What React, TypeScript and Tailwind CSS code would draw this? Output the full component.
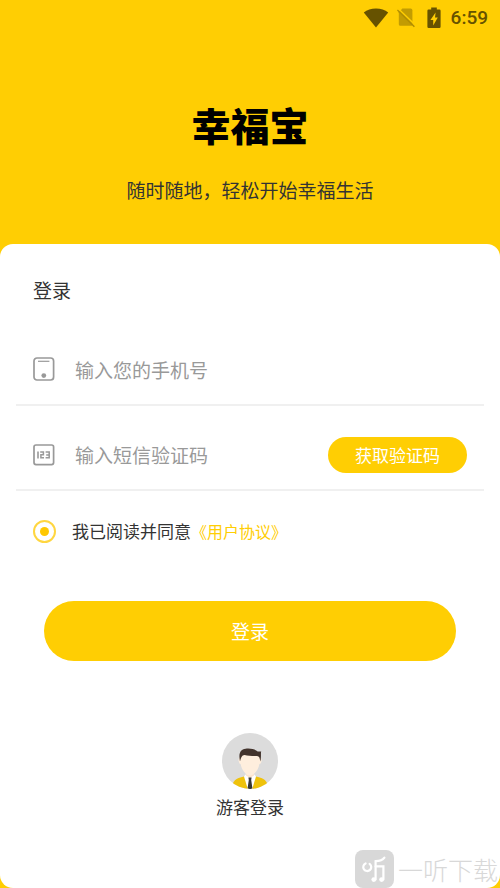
import { useState } from 'react'

function StatusBar() {
  return (
    <div className="flex h-9 items-center justify-end px-3 text-[#665200]">
      <svg width="26" height="20" viewBox="0 0 26 20" fill="currentColor" aria-hidden="true">
        <path d="M13 19.4 L0.8 4.4 C4 1.8 8.2 0.4 13 0.4 S22 1.8 25.2 4.4 Z" />
      </svg>
      <svg className="ml-2" width="18" height="20" viewBox="0 0 18 20" aria-hidden="true">
        <path d="M5.4 0.6 H13.6 Q15.4 0.6 15.4 2.4 V16.8 Q15.4 17.8 14.4 17.8 H3.4 Q1.8 17.8 1.8 16.2 V4.2 Z" fill="#c29c02" />
        <path d="M1.4 0.8 L18.4 17.2" stroke="#ffce03" strokeWidth="1.4" />
        <path d="M0.4 2 L17.4 18.8" stroke="#b08d02" strokeWidth="1.4" />
      </svg>
      <svg className="ml-3" width="14" height="22" viewBox="0 0 14 22" aria-hidden="true">
        <path
          d="M4.2 0.6 H9.8 V2.6 H12.4 Q13.6 2.6 13.6 3.8 V19.8 Q13.6 21 12.4 21 H1.6 Q0.4 21 0.4 19.8 V3.8 Q0.4 2.6 1.6 2.6 H4.2 Z"
          fill="currentColor"
        />
        <path d="M8.6 5.4 L3.4 13 H6.2 V18.6 L10.8 10.4 H8 Z" fill="#ffce03" />
      </svg>
      <span className="ml-2.5 font-['Roboto',sans-serif] text-[19px] font-medium leading-6">6:59</span>
    </div>
  )
}

function PhoneIcon() {
  return (
    <svg width="22" height="24" viewBox="0 0 22 24" fill="none" stroke="#999" aria-hidden="true">
      <rect x="1" y="1" width="19.6" height="22" rx="3" strokeWidth="1.7" />
      <path d="M5 4.3 H16.4" strokeWidth="1.2" />
      <circle cx="10.8" cy="18.6" r="2.4" fill="#999" stroke="none" />
    </svg>
  )
}

function CodeIcon() {
  return (
    <svg width="22" height="22" viewBox="0 0 22 22" fill="none" stroke="#999" aria-hidden="true">
      <rect x="1" y="1" width="19.6" height="19.6" rx="2" strokeWidth="1.7" />
      <path d="M5 7.4 V14.4" strokeWidth="1.6" />
      <path d="M7.2 8 H10.4 V10.8 H7.9 V13.8 H11 M12.6 8 H16.2 V13.8 H12.6 M13.2 10.9 H16.2" strokeWidth="1.5" />
    </svg>
  )
}

function Avatar() {
  return (
    <svg width="56" height="56" viewBox="0 0 56 56" aria-hidden="true">
      <defs>
        <clipPath id="avatar-clip">
          <circle cx="28" cy="28" r="28" />
        </clipPath>
      </defs>
      <g clipPath="url(#avatar-clip)">
        <rect width="56" height="56" fill="#dcdcdc" />
        <path d="M9 58 C10 48 13 45.4 22 43.4 H34 C43 45.4 46 48 47 58 Z" fill="#efc20b" />
        <path d="M23.6 41.5 L22 43.6 L26.4 58 H29.6 L34 43.6 L32.4 41.5 Z" fill="#fff" />
        <path d="M24 36 H32 V42.6 L28 45 L24 42.6 Z" fill="#fbe3cd" />
        <path d="M18 24 Q16.2 25 16.6 28 Q17 31 18.6 31 C19.6 37 24 42.6 28 42.6 S36.4 37 37.4 31 Q39.2 31 39.6 28 Q39.8 25 38 24 L36 19 H20 Z" fill="#feeedd" />
        <path d="M18 28.4 C16.4 21 18 16.4 23.6 15.8 C29 15 34 16.8 35.6 18.6 L39.2 18.6 C38.6 20 39.4 24 38.4 28.4 L37.4 24.6 Q36.8 23 35 23 C31 23.2 26 22.8 22.6 22 C19.6 22 19 25 18 28.4 Z" fill="#42332c" />
        <path d="M26.4 44.4 H29.6 L29.2 47 L30.4 55 L28 57.4 L25.6 55 L26.8 47 Z" fill="#373737" />
      </g>
    </svg>
  )
}

function Watermark() {
  return (
    <div className="pointer-events-none absolute bottom-0 right-0 flex items-center pr-0.5 text-[#d8d8d8]">
      <svg width="39" height="38" viewBox="0 0 39 38" fill="none" aria-hidden="true">
        <rect width="39" height="38" rx="8" fill="#d8d8d8" />
        <g stroke="#fff" strokeWidth="2.2" strokeLinecap="round">
          <path d="M10.6 13.4 A4 4 0 1 0 14.6 13.8" />
          <path d="M29.4 7.6 Q27 11 20.6 11.2 V29.4" />
          <path d="M20.6 16.4 H28.4 V29.4" />
        </g>
        <circle cx="18.8" cy="29.6" r="2.4" fill="#fff" />
        <circle cx="26.6" cy="29.6" r="2.4" fill="#fff" />
      </svg>
      <span className="ml-1 text-[25px] font-light leading-9">一听下载</span>
    </div>
  )
}

export default function App() {
  const [phone, setPhone] = useState('')
  const [code, setCode] = useState('')

  return (
    <div className="relative flex min-h-screen flex-col overflow-hidden bg-[#ffce03] font-['Noto_Sans_CJK_SC',sans-serif] text-[#333]">
      <StatusBar />
      <header className="flex flex-col items-center pb-10 pt-[62px] text-center">
        <h1 className="text-[39px] font-black leading-[52px] text-black">幸福宝</h1>
        <p className="mt-[26px] text-[19px] leading-7">随时随地，轻松开始幸福生活</p>
      </header>

      <main className="flex flex-1 flex-col rounded-[13px] bg-white px-4">
        <h2 className="px-[17px] pt-8 text-[19px] leading-7">登录</h2>

        <form className="mt-4" onSubmit={(e) => e.preventDefault()}>
          <div className="flex h-[86px] items-center border-b-2 border-[#f0f0f0] px-[17px] pt-3.5">
            <label htmlFor="phone" aria-label="输入您的手机号">
              <PhoneIcon />
            </label>
            <input
              id="phone"
              type="tel"
              value={phone}
              onChange={(e) => setPhone(e.target.value)}
              placeholder="输入您的手机号"
              className="ml-5 h-9 min-w-0 flex-1 bg-transparent text-[19px] outline-none placeholder:text-[#999]"
            />
          </div>
          <div className="flex h-[85px] items-center border-b-2 border-[#f0f0f0] px-[17px] pt-3.5">
            <label htmlFor="code" aria-label="输入短信验证码">
              <CodeIcon />
            </label>
            <input
              id="code"
              type="text"
              value={code}
              onChange={(e) => setCode(e.target.value)}
              placeholder="输入短信验证码"
              className="ml-5 h-9 min-w-0 flex-1 bg-transparent text-[19px] outline-none placeholder:text-[#999]"
            />
            <button type="button" className="h-9 rounded-full bg-[#ffce03] px-[27px] text-[17px] text-white">
              获取验证码
            </button>
          </div>

          <div className="mt-[26px] flex items-center pl-[17px] leading-7">
            <input
              id="agree"
              type="radio"
              defaultChecked
              className="grid size-[23px] appearance-none place-items-center rounded-full border-2 border-[#ffd640] before:size-[9px] before:rounded-full checked:before:bg-[#ffc800]"
            />
            <label htmlFor="agree" className="ml-4 text-[17px]">
              我已阅读并同意
            </label>
            <a href="#agreement" className="text-[16px] text-[#ffce03]">
              《用户协议》
            </a>
          </div>

          <div className="mt-14 px-7">
            <button type="submit" className="h-[60px] w-full rounded-full bg-[#ffce03] text-[19px] text-white">
              登录
            </button>
          </div>
        </form>

        <button type="button" className="mx-auto mt-[72px] flex flex-col items-center text-[17px] leading-7">
          <Avatar />
          <span className="mt-1">游客登录</span>
        </button>
      </main>
      <Watermark />
    </div>
  )
}
